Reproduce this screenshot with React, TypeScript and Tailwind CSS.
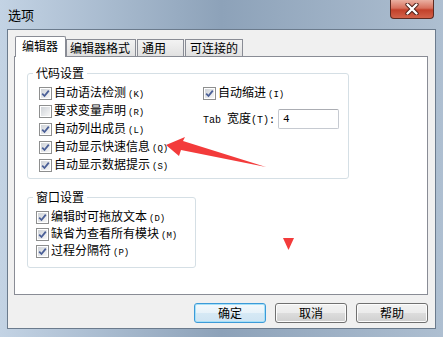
import React from "react";

type Row = { text: string; key: string; on: boolean };

const codeRows: Row[] = [
  { text: "自动语法检测", key: "(K)", on: true },
  { text: "要求变量声明", key: "(R)", on: false },
  { text: "自动列出成员", key: "(L)", on: true },
  { text: "自动显示快速信息", key: "(Q)", on: true },
  { text: "自动显示数据提示", key: "(S)", on: true },
];

const windowRows: Row[] = [
  { text: "编辑时可拖放文本", key: "(D)", on: true },
  { text: "缺省为查看所有模块", key: "(M)", on: true },
  { text: "过程分隔符", key: "(P)", on: true },
];

function Check({ on }: { on: boolean }) {
  return (
    <span className="flex h-[13px] w-[13px] shrink-0 items-center justify-center border border-[#8e8f8f] bg-white p-px">
      <span className="flex h-full w-full items-center justify-center bg-gradient-to-br from-[#cfd3d8] to-[#f7f7f7]">
        {on && (
          <svg width="9" height="9" viewBox="0 0 9 9">
            <path
              d="M1.2 4.6 L3.5 7 L7.8 1.6"
              fill="none"
              stroke="#4a5f97"
              strokeWidth="1.8"
            />
          </svg>
        )}
      </span>
    </span>
  );
}

function Key({ k }: { k: string }) {
  return (
    <span className="ml-[2px] font-['Liberation_Mono',monospace] text-[9px]">
      {k}
    </span>
  );
}

function CheckRow({ row, h }: { row: Row; h: string }) {
  return (
    <div className={`flex items-center gap-[2px] ${h}`}>
      <Check on={row.on} />
      <span className="whitespace-nowrap">
        {row.text}
        <Key k={row.key} />
      </span>
    </div>
  );
}

function Group({
  title,
  className,
  children,
}: {
  title: string;
  className: string;
  children: React.ReactNode;
}) {
  return (
    <div
      className={`relative rounded-[3px] border border-[#d5dfe5] ${className}`}
    >
      <span className="absolute -top-[9px] left-[5px] bg-white px-[3px] leading-[16px]">
        {title}
      </span>
      {children}
    </div>
  );
}

export default function App() {
  return (
    <div className="relative flex h-[337px] w-[443px] flex-col bg-gradient-to-r from-[#c3d3e4] via-[#8da2b9] to-[#aebfd1] font-['Noto_Sans_CJK_SC',sans-serif] text-[12px] leading-[16px] text-black">
      {/* Title bar */}
      <div className="flex h-[29px] items-start">
        <span className="ml-[8px] mt-[7px] text-[13px] leading-[16px]">
          选项
        </span>
        <button className="ml-auto mr-[9px] flex h-[19px] w-[44px] items-center justify-center rounded-b-[4px] border border-t-0 border-[#5e2b22] bg-[linear-gradient(#eab0a2_0%,#d7705d_45%,#c2412b_55%,#d2624a_100%)]">
          <svg width="14" height="12" viewBox="0 0 14 12">
            <path
              d="M2.5 1.5 L11.5 10.5 M11.5 1.5 L2.5 10.5"
              stroke="#4a1d16"
              strokeWidth="4.2"
              strokeLinecap="round"
            />
            <path
              d="M2.5 1.5 L11.5 10.5 M11.5 1.5 L2.5 10.5"
              stroke="#ffffff"
              strokeWidth="2.4"
              strokeLinecap="round"
            />
          </svg>
        </button>
      </div>

      {/* Client area */}
      <div className="mx-[7px] mb-[8px] flex flex-1 flex-col border border-[#6b7b8d] bg-[#f0f0f0] px-[6px] pt-[6px]">
        {/* Tabs */}
        <div className="relative z-10 flex h-[20px] items-start">
          <div className="-mb-px ml-px h-[21px] w-[51px] rounded-t-[2px] border border-b-0 border-[#898c95] bg-white pl-[6px] pt-[1px]">
            编辑器
          </div>
          <div className="mt-[3px] h-[17px] w-[70px] border border-b-0 border-[#898c95] bg-gradient-to-b from-[#f3f3f3] to-[#e1e1e1] pl-[3px] leading-[15px]">
            编辑器格式
          </div>
          <div className="ml-px mt-[3px] h-[17px] w-[47px] border border-b-0 border-[#898c95] bg-gradient-to-b from-[#f3f3f3] to-[#e1e1e1] pl-[4px] leading-[15px]">
            通用
          </div>
          <div className="ml-px mt-[3px] h-[17px] w-[58px] border border-b-0 border-[#898c95] bg-gradient-to-b from-[#f3f3f3] to-[#e1e1e1] pl-[4px] leading-[15px]">
            可连接的
          </div>
        </div>

        {/* Panel */}
        <div className="flex h-[239px] w-[414px] flex-col border border-[#898c95] bg-white pl-[12px] pt-[16px]">
          <Group title="代码设置" className="flex h-[106px] w-[322px] pl-[11px] pt-[10px]">
            <div className="flex w-[164px] flex-col">
              {codeRows.map((r) => (
                <CheckRow key={r.text} row={r} h="h-[18px]" />
              ))}
            </div>
            <div className="flex flex-col">
              <CheckRow
                row={{ text: "自动缩进", key: "(I)", on: true }}
                h="h-[18px]"
              />
              <div className="mt-[7px] flex h-[20px] items-center">
                <span className="whitespace-nowrap">
                  <span className="font-['Liberation_Mono',monospace] text-[10px]">
                    Tab{" "}
                  </span>
                  宽度
                  <span className="font-['Liberation_Mono',monospace] text-[10px]">
                    (T):
                  </span>
                </span>
                <div className="ml-[3px] flex h-[20px] w-[61px] items-center rounded-[2px] border border-[#c6cad1] border-t-[#abadb3] bg-white pl-[4px] font-['Liberation_Mono',monospace] text-[11px]">
                  4
                </div>
              </div>
            </div>
          </Group>

          <Group title="窗口设置" className="mt-[18px] flex h-[71px] w-[169px] flex-col pl-[8px] pt-[11px]">
            {windowRows.map((r) => (
              <CheckRow key={r.text} row={r} h="h-[17px]" />
            ))}
          </Group>
        </div>

        {/* Buttons */}
        <div className="mt-[8px] flex w-[414px] justify-end gap-[9px]">
          <button className="h-[20px] w-[72px] rounded-[3px] border border-[#3c9ad8] bg-[linear-gradient(#f4f9fc_0%,#e7f2f9_50%,#d6e9f5_50%,#cfe4f2_100%)] text-[12px] leading-[16px] shadow-[inset_0_0_0_1px_#a6e0f8]">
            确定
          </button>
          <button className="h-[20px] w-[72px] rounded-[3px] border border-[#707070] bg-[linear-gradient(#f2f2f2_0%,#ebebeb_50%,#dddddd_50%,#cfcfcf_100%)] text-[12px] leading-[16px] shadow-[inset_0_0_0_1px_#fcfcfc]">
            取消
          </button>
          <button className="h-[20px] w-[72px] rounded-[3px] border border-[#707070] bg-[linear-gradient(#f2f2f2_0%,#ebebeb_50%,#dddddd_50%,#cfcfcf_100%)] text-[12px] leading-[16px] shadow-[inset_0_0_0_1px_#fcfcfc]">
            帮助
          </button>
        </div>
      </div>

      {/* Annotation overlay */}
      <svg
        className="pointer-events-none absolute left-0 top-0"
        width="443"
        height="337"
        viewBox="0 0 443 337"
      >
        <polygon
          points="166,145 185,137 183,141 266,167 181,150 179,156"
          fill="#f33b3b"
        />
        <polygon points="283,238 294,238 288.5,250" fill="#f33b3b" />
      </svg>
    </div>
  );
}
